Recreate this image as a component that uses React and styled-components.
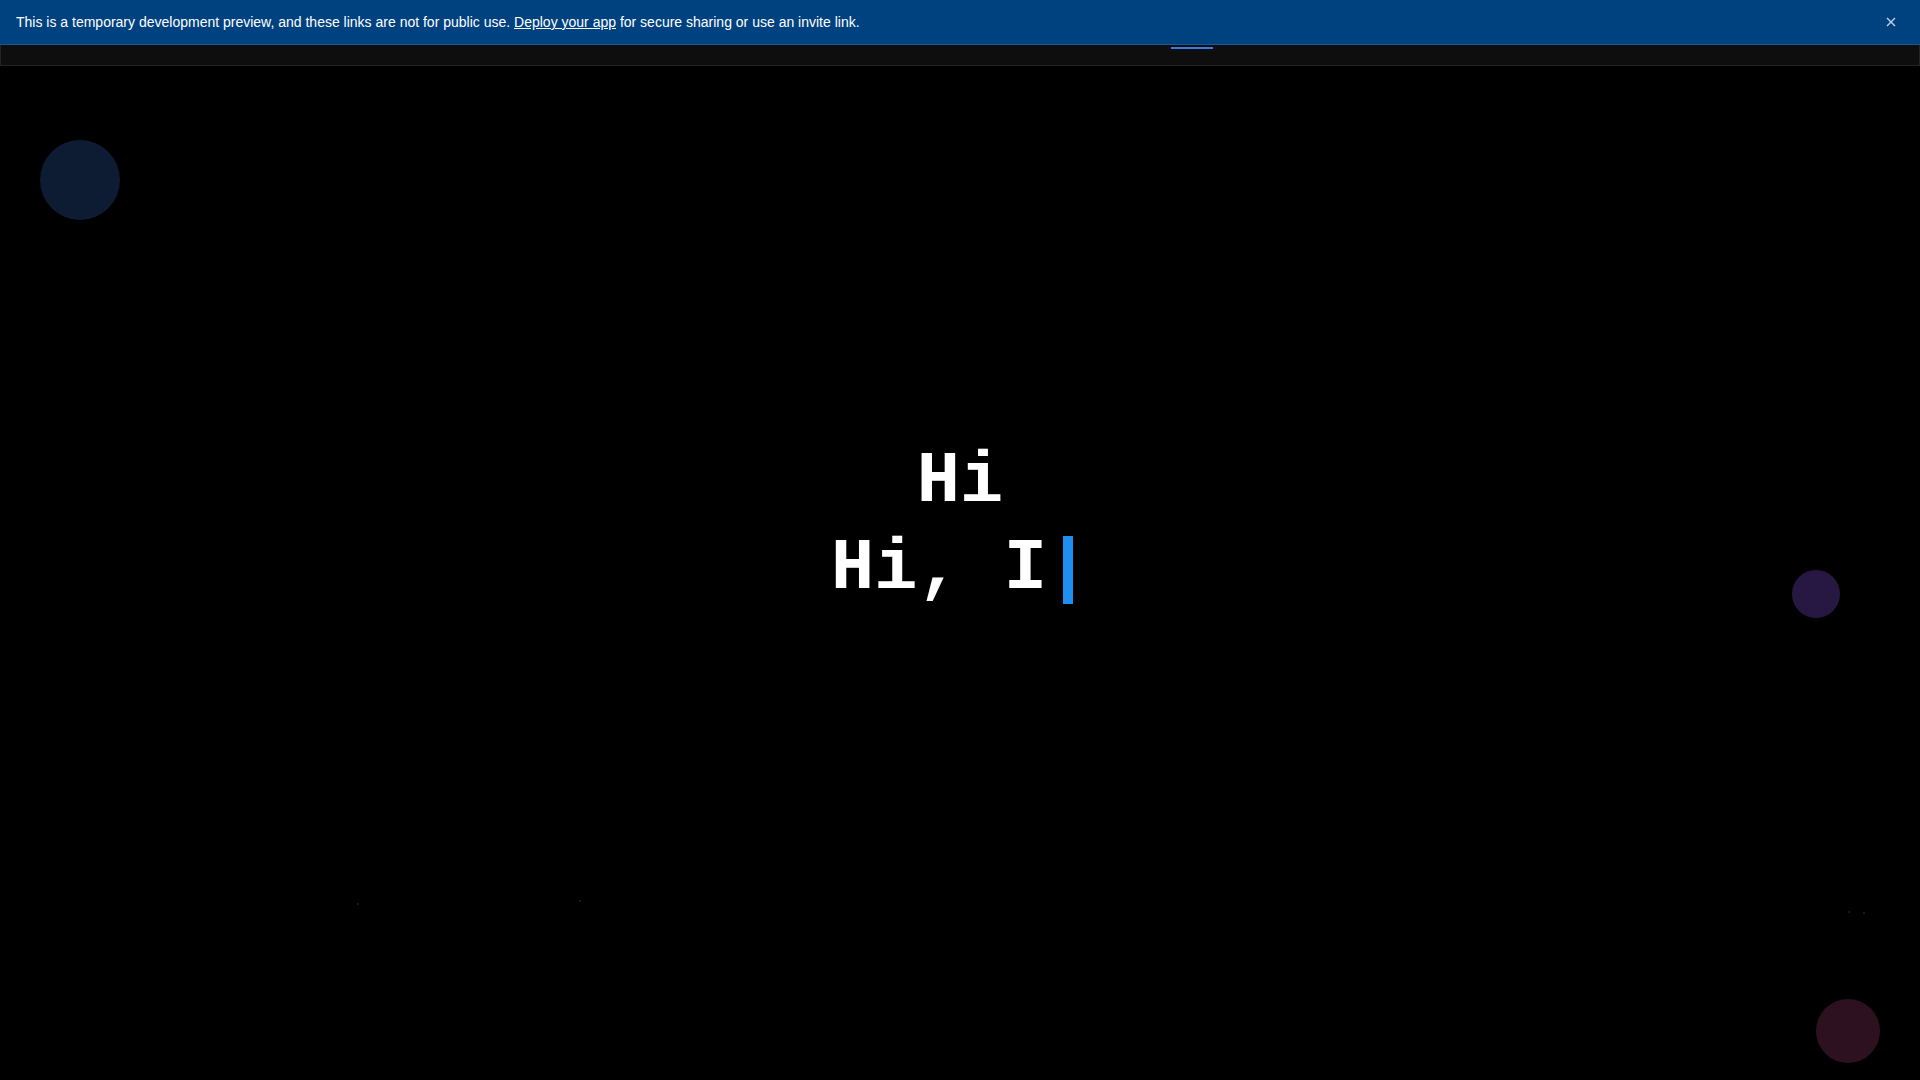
import React from 'react'
import styled, { createGlobalStyle } from 'styled-components'

const GlobalStyle = createGlobalStyle`
  html, body {
    margin: 0;
    padding: 0;
    background: #000;
  }
  #root {
    min-height: 100vh;
  }
`

const blobs = [
  { x: 40, y: 140, size: 80, color: '#0d1b33' },
  { x: 1792, y: 570, size: 48, color: '#271843' },
  { x: 1816, y: 999, size: 64, color: '#2d1120' },
]

const specks = [
  { x: 357, y: 903, color: '#1c2340' },
  { x: 579, y: 900, color: '#1c2340' },
  { x: 1848, y: 911, color: '#241a3c' },
  { x: 1863, y: 912, color: '#241a3c' },
]

const App = () => {
  return (
    <Page>
      <GlobalStyle />
      <Banner>
        <BannerText>
          This is a temporary development preview, and these links are not for public use.{' '}
          <a href="#">Deploy your app</a> for secure sharing or use an invite link.
        </BannerText>
        <CloseButton aria-label="close">
          <svg width="10" height="10" viewBox="0 0 10 10">
            <path d="M1 1L9 9M9 1L1 9" stroke="#c4d3e6" strokeWidth="1.4" />
          </svg>
        </CloseButton>
      </Banner>
      <NavStrip>
        <ActiveMark />
      </NavStrip>
      <Hero>
        {blobs.map((b, i) => (
          <Blob key={i} style={{ left: b.x, top: b.y, width: b.size, height: b.size, background: b.color }} />
        ))}
        {specks.map((s, i) => (
          <Speck key={i} style={{ left: s.x, top: s.y, background: s.color }} />
        ))}
        <Greeting>
          <Line>Hi</Line>
          <Line>Hi, I<Cursor /></Line>
        </Greeting>
      </Hero>
    </Page>
  )
}

export default App

const Page = styled.div`
  position: relative;
  min-height: 100vh;
  display: flex;
  flex-direction: column;
  background: #000;
  overflow: hidden;
`
const Banner = styled.div`
  height: 45px;
  box-sizing: border-box;
  display: flex;
  align-items: center;
  justify-content: space-between;
  padding: 0 24px 0 16px;
  background: #00417f;
  border-bottom: 1px solid #1a5796;
  position: relative;
  z-index: 2;
`
const BannerText = styled.p`
  margin: 0;
  font-family: "Liberation Sans", Arial, sans-serif;
  font-size: 14px;
  color: #fff;
  a {
    color: #fff;
    text-decoration: underline;
  }
`
const CloseButton = styled.button`
  border: none;
  background: none;
  padding: 0;
  display: flex;
  align-items: center;
  cursor: pointer;
`
const NavStrip = styled.div`
  height: 21px;
  box-sizing: border-box;
  display: flex;
  background: #0e0e0e;
  border: 1px solid #242424;
  border-top: none;
`
const ActiveMark = styled.div`
  width: 42px;
  height: 2px;
  margin: 2px 0 0 1170px;
  background: #3b7be0;
`
const Hero = styled.main`
  flex: 1;
  display: flex;
  align-items: center;
  justify-content: center;
  padding-bottom: 94px;
`
const Blob = styled.div`
  position: absolute;
  border-radius: 50%;
`
const Speck = styled.div`
  position: absolute;
  width: 2px;
  height: 2px;
  border-radius: 50%;
`
const Greeting = styled.div`
  display: flex;
  flex-direction: column;
  align-items: center;
  font-family: "Liberation Mono", "Courier New", monospace;
  font-weight: bold;
  font-size: 72px;
  line-height: 87px;
  color: #fff;
  position: relative;
  z-index: 1;
`
const Line = styled.div`
  white-space: pre;
`
const Cursor = styled.span`
  display: inline-block;
  width: 10px;
  height: 68px;
  margin: 0 16px;
  background: #1e8ef0;
  vertical-align: -16px;
`
